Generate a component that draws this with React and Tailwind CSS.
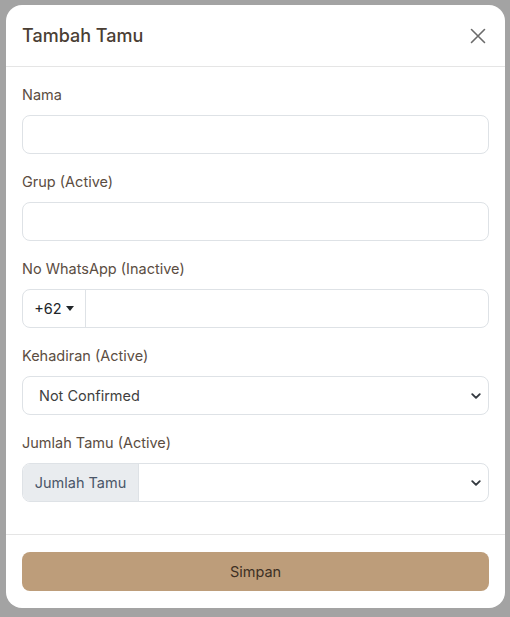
import React from 'react';

const font = { fontFamily: 'Inter, "Noto Sans", sans-serif' };

function Field({ label, children }) {
  return (
    <div className="mb-[16px]">
      <label className="block text-[14.5px] leading-6 text-[#5b4d42] mb-[8px]">{label}</label>
      {children}
    </div>
  );
}

function Chevron() {
  return (
    <svg width="10" height="10" viewBox="0 0 16 16" className="text-[#343a40]">
      <path d="M2 5l6 6 6-6" fill="none" stroke="currentColor" strokeWidth="3" strokeLinecap="round" strokeLinejoin="round" />
    </svg>
  );
}

export default function App() {
  return (
    <div className="min-h-[617px] bg-[#a3a3a3] pl-[6px] pr-[5px] pt-[5px] pb-[9px]" style={font}>
      <div className="bg-white rounded-[16px] flex flex-col">
        <div className="flex items-center justify-between pl-[16px] pr-[19px] h-[62px] border-b border-[#e5e5e5]">
          <h1 className="text-[18px] font-medium text-[#4a3e34]">Tambah Tamu</h1>
          <svg width="16" height="16" viewBox="0 0 16 16" className="text-[#6b6b6b]">
            <path d="M1.5 1.5l13 13M14.5 1.5l-13 13" stroke="currentColor" strokeWidth="1.6" strokeLinecap="round" />
          </svg>
        </div>

        <div className="px-[16px] pt-[16px] pb-[16px]">
          <Field label="Nama">
            <div className="h-[39px] border border-[#dee2e6] rounded-[8px]" />
          </Field>
          <Field label="Grup (Active)">
            <div className="h-[39px] border border-[#dee2e6] rounded-[8px]" />
          </Field>
          <Field label="No WhatsApp (Inactive)">
            <div className="h-[39px] border border-[#dee2e6] rounded-[8px] flex">
              <div className="w-[63px] border-r border-[#dee2e6] flex items-center justify-center gap-[4px] text-[14.5px] text-[#212529]">
                +62
                <svg width="8" height="5" viewBox="0 0 8 5"><path d="M0 0h8L4 5z" fill="#212529" /></svg>
              </div>
              <div className="flex-1" />
            </div>
          </Field>
          <Field label="Kehadiran (Active)">
            <div className="h-[39px] border border-[#dee2e6] rounded-[8px] flex items-center justify-between pl-[16px] pr-[3px]">
              <span className="text-[14.5px] text-[#3f3f3f]">Not Confirmed</span>
              <span className="pr-[4px]"><Chevron /></span>
            </div>
          </Field>
          <Field label="Jumlah Tamu (Active)">
            <div className="h-[39px] border border-[#dee2e6] rounded-[8px] flex overflow-hidden">
              <div className="w-[116px] bg-[#e9ecef] border-r border-[#dee2e6] flex items-center justify-center text-[14.5px] text-[#4a5668]">
                Jumlah Tamu
              </div>
              <div className="flex-1 flex items-center justify-end pr-[7px]">
                <Chevron />
              </div>
            </div>
          </Field>
        </div>

        <div className="border-t border-[#e5e5e5] px-[16px] pt-[17px] pb-[17px]">
          <button className="w-full h-[39px] rounded-[8px] bg-[#bd9d7a] text-[14.5px] text-[#3d3024]">Simpan</button>
        </div>
      </div>
    </div>
  );
}
